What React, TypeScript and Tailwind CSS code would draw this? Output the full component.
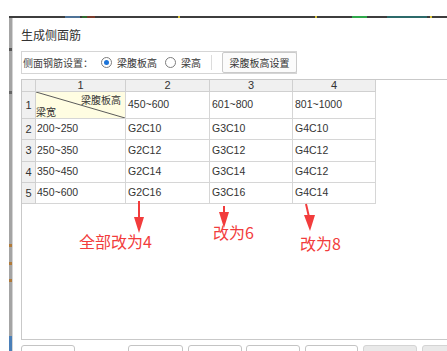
import React from 'react'

const dataRows = [
  { n: '2', cells: ['200~250', 'G2C10', 'G3C10', 'G4C10'] },
  { n: '3', cells: ['250~350', 'G2C12', 'G3C12', 'G4C12'] },
  { n: '4', cells: ['350~450', 'G2C14', 'G3C14', 'G4C12'] },
  { n: '5', cells: ['450~600', 'G2C16', 'G3C16', 'G4C14'] },
]

const cell = 'border-r border-b border-[#d6d6d6] flex items-center overflow-hidden whitespace-nowrap'
const head = 'border-r border-b border-[#d0d0d0] bg-[#f0f0f0] flex items-center justify-center text-[11px] text-[#333]'

function Radio({ checked, label }: { checked?: boolean; label: string }) {
  return (
    <div className="flex items-center shrink-0 whitespace-nowrap">
      <span className="w-[11px] h-[11px] shrink-0 rounded-full border border-[#7d7d7d] bg-white flex items-center justify-center">
        {checked && <span className="w-[5px] h-[5px] rounded-full bg-[#1c74d9]" />}
      </span>
      <span className="ml-[5px] text-[10px] leading-[12px] text-[#333]">{label}</span>
    </div>
  )
}

export default function App() {
  return (
    <div className="relative w-[447px] h-[351px] overflow-hidden bg-white font-['Microsoft_YaHei','Noto_Sans_CJK_SC',sans-serif]">
      <div className="h-[16px]" />
      {/* window strip behind the dialog */}
      <div className="relative h-[2px] ml-[9px] bg-[#3d3d3d]">
        <span className="absolute left-[56px] top-0 w-[15px] h-[2px] bg-[#4f7397]" />
        <span className="absolute left-[73px] top-0 w-[5px] h-[2px] bg-[#2f6b2f]" />
        <span className="absolute left-[78px] top-0 w-[8px] h-[2px] bg-[#7a3a2a]" />
        <span className="absolute left-[169px] top-0 w-[2px] h-[2px] bg-[#d8c23a]" />
        <span className="absolute left-[306px] top-0 w-[2px] h-[2px] bg-[#d8c23a]" />
        <span className="absolute left-[343px] top-0 w-[15px] h-[2px] bg-[#2fa84a]" />
        <span className="absolute left-[378px] top-0 w-[40px] h-[2px] bg-[#2c6a6a]" />
        <span className="absolute left-[421px] top-0 w-[2px] h-[2px] bg-[#d8c23a]" />
      </div>
      <div className="flex h-[333px]">
        <div className="w-[12px] flex">
          <div className="ml-[9px] w-[3px] h-full flex flex-col bg-[#a4a4a4]">
            <div className="h-[30px]" />
            <div className="h-[3px] bg-[#555]" />
            <div className="h-[40px]" />
            <div className="h-[3px] bg-[#666]" />
            <div className="h-[150px]" />
            <div className="h-[3px] bg-[#b07a3a]" />
            <div className="h-[15px]" />
            <div className="h-[3px] bg-[#b07a3a]" />
            <div className="h-[14px]" />
            <div className="h-[3px] bg-[#b07a3a]" />
            <div className="flex-1" />
            <div className="h-[15px] bg-[#4a7fb8]" />
          </div>
        </div>
        <div className="flex-1 flex flex-col border-l border-[#d4d4d4] pl-[8px] pt-[9px]">
          <div className="text-[12px] leading-[16px] text-[#333]">生成侧面筋</div>

          {/* settings group */}
          <div className="mt-[8px] w-[276px] h-[25px] border border-[#d5d5d5] flex items-center whitespace-nowrap">
            <span className="ml-[1px] shrink-0 text-[10px] leading-[12px] text-[#444]">侧面钢筋设置：</span>
            <div className="ml-[8px]">
              <Radio checked label="梁腹板高" />
            </div>
            <div className="ml-[8px]">
              <Radio label="梁高" />
            </div>
            <div className="ml-[10px] w-px h-[15px] shrink-0 bg-[#dcdcdc]" />
            <button className="ml-[10px] w-[75px] h-[21px] shrink-0 border border-[#cacaca] rounded-[2px] bg-[#fbfbfb] text-[10px] leading-[12px] text-[#333] flex items-center justify-center">
              梁腹板高设置
            </button>
          </div>

          {/* table panel */}
          <div className="mt-[5px] w-[440px] h-[261px] border border-[#c9c9c9] shrink-0">
            <div className="grid grid-cols-[14px_90px_84px_83px_83px] grid-rows-[12px_27px_21px_22px_21px_21px] w-max text-[10.5px] text-[#333] font-['Liberation_Sans','Noto_Sans_CJK_SC',sans-serif]">
              <div className={head} />
              <div className={head}>1</div>
              <div className={head}>2</div>
              <div className={head}>3</div>
              <div className={head}>4</div>

              <div className={head}>1</div>
              <div className="relative border-r border-b border-[#d6d6d6] bg-[#fffde2] overflow-hidden whitespace-nowrap">
                <svg className="absolute inset-0" width="89" height="26" viewBox="0 0 89 26">
                  <line x1="0" y1="0" x2="89" y2="26" stroke="#5a5a5a" strokeWidth="1" />
                </svg>
                <span className="absolute right-[4px] top-[2px] text-[10px] leading-[12px] font-['Noto_Sans_CJK_SC',sans-serif]">梁腹板高</span>
                <span className="absolute left-0 bottom-0 text-[10px] leading-[12px] font-['Noto_Sans_CJK_SC',sans-serif]">梁宽</span>
              </div>
              <div className={`${cell} pl-[2px]`}>450~600</div>
              <div className={`${cell} pl-[2px]`}>601~800</div>
              <div className={`${cell} pl-[2px]`}>801~1000</div>

              {dataRows.map((r) => (
                <React.Fragment key={r.n}>
                  <div className={head}>{r.n}</div>
                  {r.cells.map((c, i) => (
                    <div key={i} className={`${cell} ${i === 0 ? 'pl-[1px]' : 'pl-[2px]'}`}>
                      {c}
                    </div>
                  ))}
                </React.Fragment>
              ))}
            </div>
          </div>

          {/* bottom buttons, cut off by the window */}
          <div className="mt-[5px] flex">
            <div className="w-[54px] h-[20px] shrink-0 border border-[#c4c4c4] rounded-[3px] bg-white" />
            <div className="ml-[53px] w-[55px] h-[20px] shrink-0 border border-[#c4c4c4] rounded-[3px] bg-white" />
            <div className="ml-[5px] w-[54px] h-[20px] shrink-0 border border-[#c4c4c4] rounded-[3px] bg-white" />
            <div className="ml-[4px] w-[54px] h-[20px] shrink-0 border border-[#c4c4c4] rounded-[3px] bg-white" />
            <div className="ml-[5px] w-[53px] h-[20px] shrink-0 border border-[#c4c4c4] rounded-[3px] bg-white" />
            <div className="ml-[5px] w-[54px] h-[20px] shrink-0 border border-[#d4d4d4] rounded-[3px] bg-[#e9e9e9]" />
            <div className="ml-[5px] w-[54px] h-[20px] shrink-0 border border-[#d4d4d4] rounded-[3px] bg-[#e9e9e9]" />
          </div>
        </div>
      </div>

      {/* red annotations drawn over the screenshot */}
      <svg className="absolute inset-0 pointer-events-none" width="447" height="351" viewBox="0 0 447 351">
        <line x1="139" y1="201" x2="139" y2="219" stroke="#f23c3c" strokeWidth="2" />
        <polygon points="134,217 144,217 139,233" fill="#f23c3c" />
        <line x1="224" y1="206" x2="224" y2="214" stroke="#f23c3c" strokeWidth="2" />
        <polygon points="219,212 229,212 224,228" fill="#f23c3c" />
        <line x1="306" y1="204" x2="309" y2="217" stroke="#f23c3c" strokeWidth="2" />
        <polygon points="304,215 315,215 310,231" fill="#f23c3c" />
      </svg>
      <span className="absolute left-[79px] top-[233px] text-[16px] leading-[16px] text-[#f23c3c]">全部改为4</span>
      <span className="absolute left-[213px] top-[224px] text-[16px] leading-[16px] text-[#f23c3c]">改为6</span>
      <span className="absolute left-[300px] top-[235px] text-[16px] leading-[16px] text-[#f23c3c]">改为8</span>
    </div>
  )
}
